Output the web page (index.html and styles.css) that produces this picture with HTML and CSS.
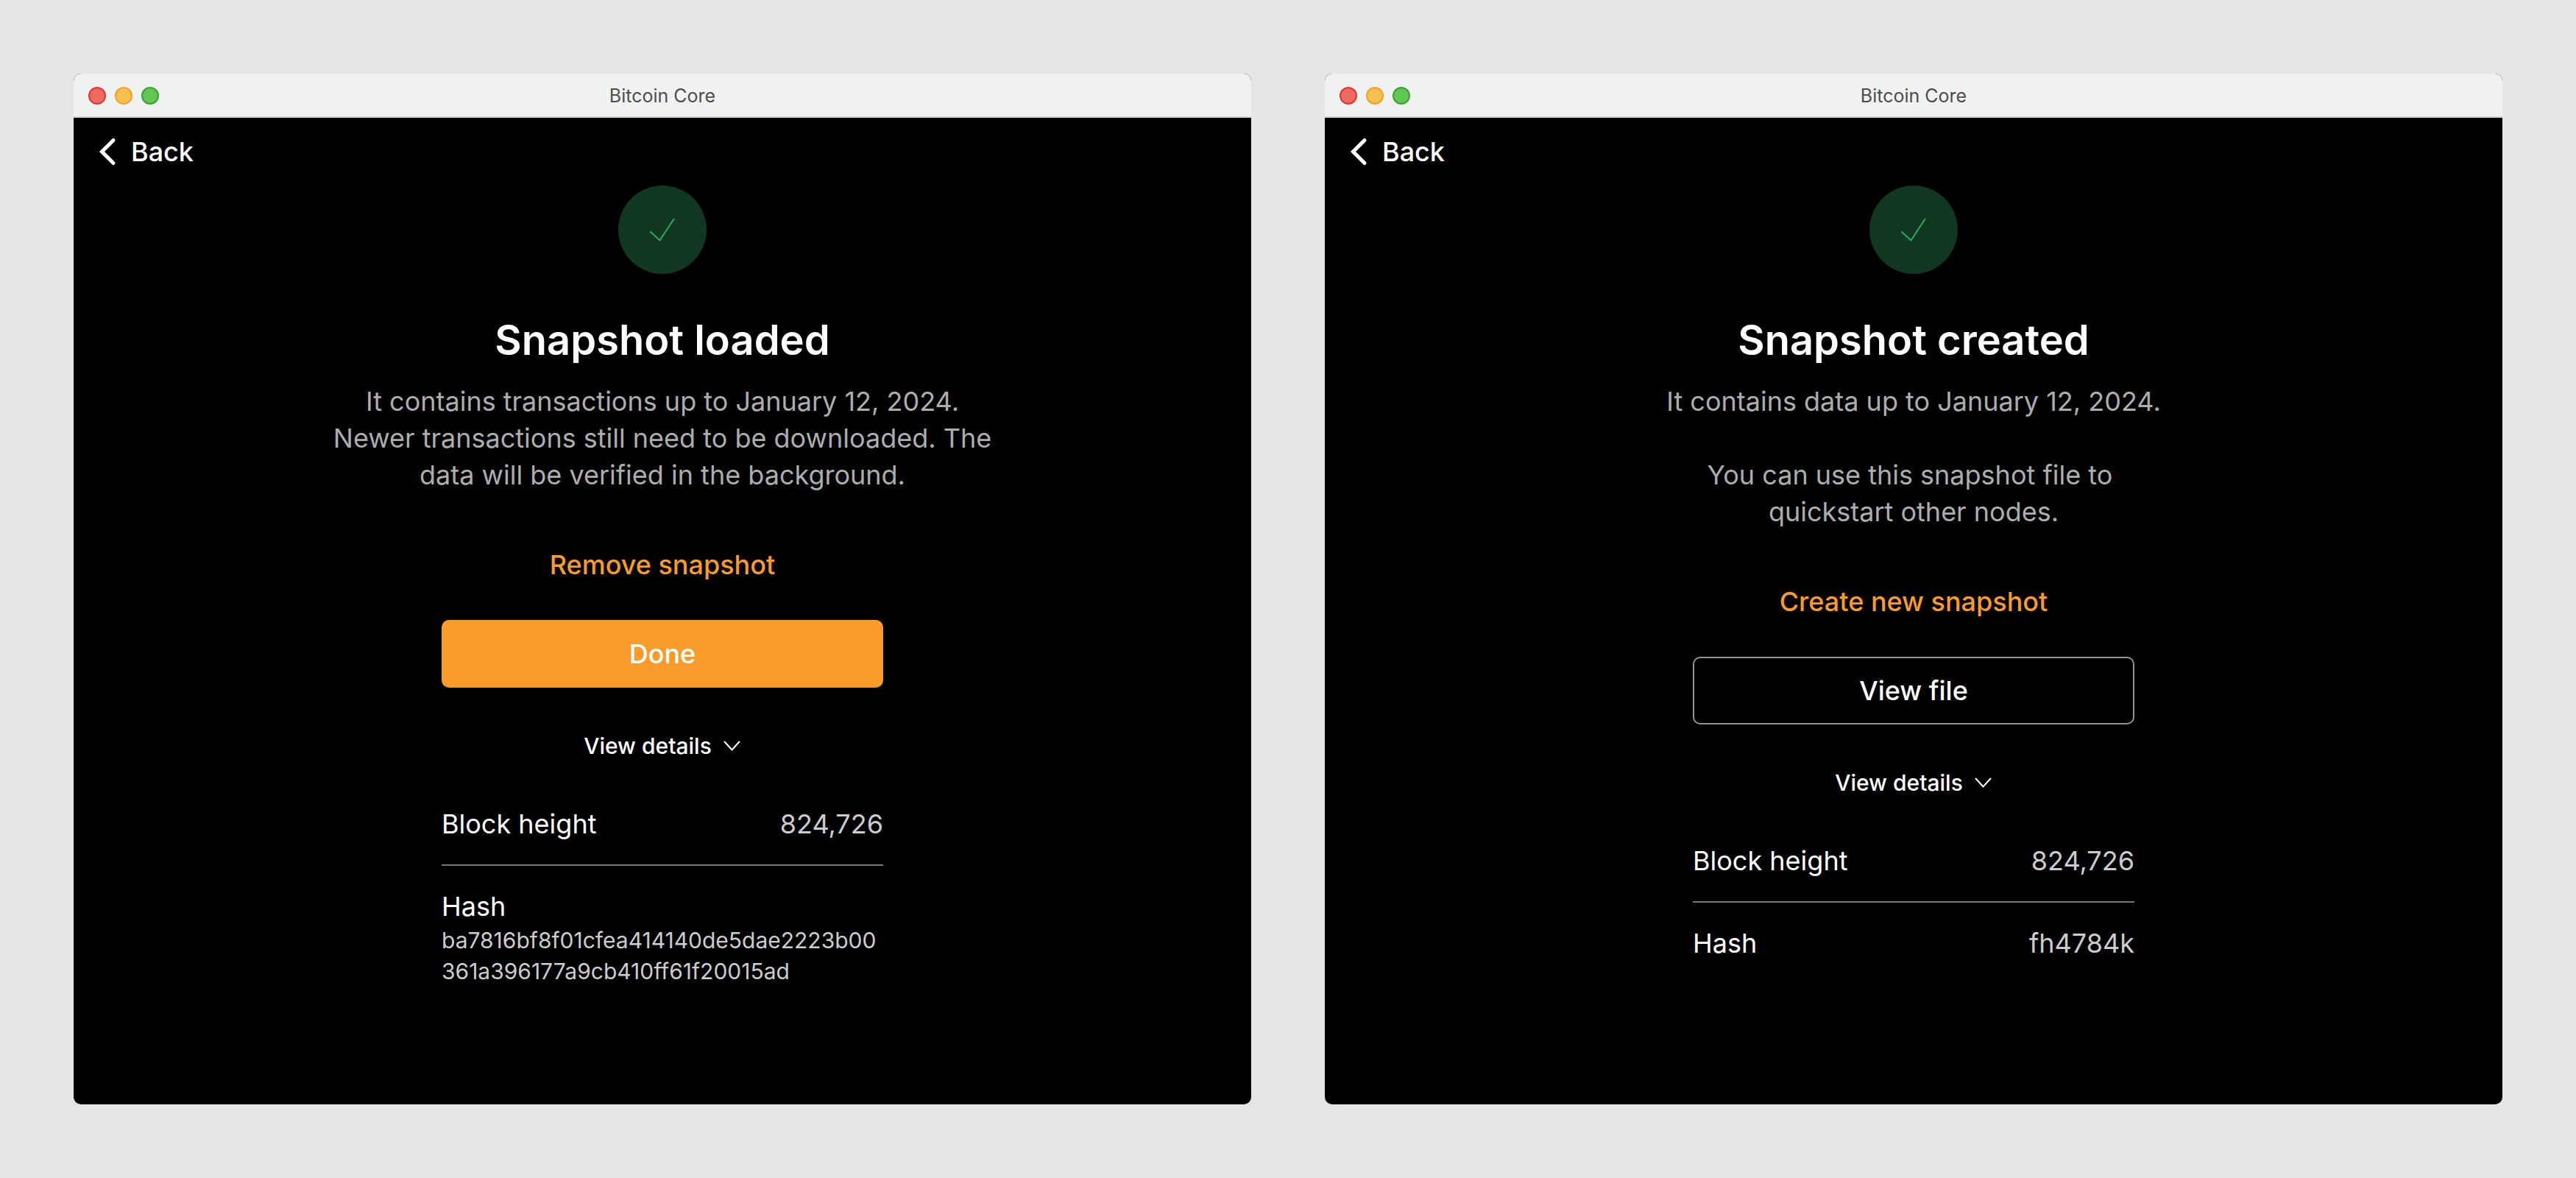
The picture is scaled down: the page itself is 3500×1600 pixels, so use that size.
FILE: index.html
```html
<!DOCTYPE html>
<html lang="en">
<head>
  <meta charset="utf-8">
  <meta name="viewport" content="width=device-width, initial-scale=1">
  <title>Bitcoin Core</title>
  <link rel="stylesheet" href="styles.css">
</head>
<body>
  <main class="desktop">
    <section class="window">
      <header class="titlebar">
        <div class="lights">
          <span class="light light-close"></span>
          <span class="light light-minimize"></span>
          <span class="light light-zoom"></span>
        </div>
        <span class="titlebar-text">Bitcoin Core</span>
      </header>
      <nav class="nav">
        <button class="back" type="button">
          <svg class="back-icon" viewBox="0 0 24 40" aria-hidden="true"><path d="M20 4.500 4.500 20 20 35.500"/></svg>
          Back
        </button>
      </nav>
      <div class="content">
        <div class="badge">
          <svg class="badge-icon" viewBox="0 0 40 40" aria-hidden="true"><path d="M4 23 16.500 34.500 35.500 5.500"/></svg>
        </div>
        <h1 class="title">Snapshot loaded</h1>
        <div class="description">
          <p>It contains transactions up to January 12, 2024.<br>Newer transactions still need to be downloaded. The data will be verified in the background.</p>
        </div>
        <button class="link-button" type="button">Remove snapshot</button>
        <button class="button button-primary" type="button">Done</button>
        <button class="toggle" type="button" aria-expanded="true">
          View details
          <svg class="toggle-icon" viewBox="0 0 24 16" aria-hidden="true"><path d="M1.500 2.500 11.500 13.500 21.500 2.500"/></svg>
        </button>
        <dl class="details">
          <div class="row">
            <dt>Block height</dt>
            <dd>824,726</dd>
          </div>
          <div class="row row-stacked">
            <dt>Hash</dt>
            <dd>ba7816bf8f01cfea414140de5dae2223b00361a396177a9cb410ff61f20015ad</dd>
          </div>
        </dl>
      </div>
    </section>

    <section class="window">
      <header class="titlebar">
        <div class="lights">
          <span class="light light-close"></span>
          <span class="light light-minimize"></span>
          <span class="light light-zoom"></span>
        </div>
        <span class="titlebar-text">Bitcoin Core</span>
      </header>
      <nav class="nav">
        <button class="back" type="button">
          <svg class="back-icon" viewBox="0 0 24 40" aria-hidden="true"><path d="M20 4.500 4.500 20 20 35.500"/></svg>
          Back
        </button>
      </nav>
      <div class="content">
        <div class="badge">
          <svg class="badge-icon" viewBox="0 0 40 40" aria-hidden="true"><path d="M4 23 16.500 34.500 35.500 5.500"/></svg>
        </div>
        <h1 class="title">Snapshot created</h1>
        <div class="description">
          <p>It contains data up to January 12, 2024.</p>
          <p>You can use this snapshot file to&nbsp;<br>quickstart other nodes.</p>
        </div>
        <button class="link-button" type="button">Create new snapshot</button>
        <button class="button button-outline" type="button">View file</button>
        <button class="toggle" type="button" aria-expanded="true">
          View details
          <svg class="toggle-icon" viewBox="0 0 24 16" aria-hidden="true"><path d="M1.500 2.500 11.500 13.500 21.500 2.500"/></svg>
        </button>
        <dl class="details">
          <div class="row">
            <dt>Block height</dt>
            <dd>824,726</dd>
          </div>
          <div class="row">
            <dt>Hash</dt>
            <dd>fh4784k</dd>
          </div>
        </dl>
      </div>
    </section>
  </main>
</body>
</html>
```
FILE: styles.css
```css
* {
  box-sizing: border-box;
}

body {
  margin: 0;
  background: #e5e5e5;
  color: #fff;
  font-family: Inter, "Liberation Sans", sans-serif;
  font-size: 36px;
  line-height: 50px;
}

h1,
p,
dl,
dd {
  margin: 0;
}

button {
  padding: 0;
  border: 0;
  background: none;
  color: inherit;
  font: inherit;
  cursor: pointer;
}

svg {
  fill: none;
  stroke: currentColor;
  stroke-linecap: round;
  flex: none;
}

.desktop {
  display: grid;
  grid-template-columns: 1fr 1fr;
  gap: 100px;
  min-height: 100vh;
  padding: 100px;
}

.window {
  display: flex;
  flex-direction: column;
  overflow: hidden;
  border-radius: 10px;
  background: #000;
}

.titlebar {
  display: grid;
  grid-template-columns: 1fr auto 1fr;
  align-items: center;
  height: 60px;
  padding: 2px 20px 0;
  border-bottom: 2px solid #d1d1d1;
  background: #f0f2f1;
}

.lights {
  display: flex;
  gap: 12px;
}

.light {
  width: 24px;
  height: 24px;
  border: 2px solid;
  border-radius: 50%;
}

.light-close {
  border-color: #e33432;
  background: #ed6a5e;
}

.light-minimize {
  border-color: #f2a02c;
  background: #f5c04f;
}

.light-zoom {
  border-color: #30a72c;
  background: #62c554;
}

.titlebar-text {
  color: #4d4d4d;
  font-size: 25px;
}

.nav {
  display: flex;
  align-items: center;
  height: 92px;
  padding: 0 34px;
}

.back {
  display: flex;
  align-items: center;
  gap: 20px;
  font-weight: 500;
}

.back-icon {
  width: 24px;
  height: 40px;
  stroke-width: 5px;
}

.content {
  display: flex;
  flex-direction: column;
  align-items: center;
  padding: 0 40px 100px;
}

.badge {
  display: grid;
  place-items: center;
  width: 120px;
  height: 120px;
  border-radius: 50%;
  background: #113621;
  color: #27ae60;
}

.badge-icon {
  width: 40px;
  height: 40px;
  stroke-width: 2px;
}

.title {
  margin-top: 56px;
  font-size: 56px;
  font-weight: 600;
  line-height: 68px;
}

.description {
  max-width: 940px;
  margin-top: 24px;
  color: #adadad;
  text-align: center;
}

.description p + p {
  margin-top: 50px;
}

.link-button {
  margin-top: 72px;
  color: #f99b2b;
  font-weight: 500;
}

.button {
  width: 100%;
  max-width: 600px;
  height: 92px;
  margin-top: 50px;
  border-radius: 10px;
  font-weight: 500;
}

.button-primary {
  background: #f99b2b;
}

.button-outline {
  border: 2px solid #949494;
}

.toggle {
  display: flex;
  align-items: center;
  gap: 16px;
  margin-top: 58px;
  font-size: 30px;
  font-weight: 500;
  line-height: 42px;
}

.toggle-icon {
  width: 24px;
  height: 16px;
  stroke-width: 2px;
}

.details {
  width: 100%;
  max-width: 600px;
  margin-top: 60px;
}

.row {
  display: flex;
  justify-content: space-between;
}

.row + .row {
  margin-top: 30px;
  padding-top: 30px;
  border-top: 2px solid #777;
}

.row dd {
  color: #ccc;
}

.row-stacked {
  display: block;
}

.row-stacked dd {
  font-size: 30px;
  line-height: 42px;
  overflow-wrap: anywhere;
}

@media (max-width: 1800px) {
  .desktop {
    grid-template-columns: 1fr;
  }
}
```
